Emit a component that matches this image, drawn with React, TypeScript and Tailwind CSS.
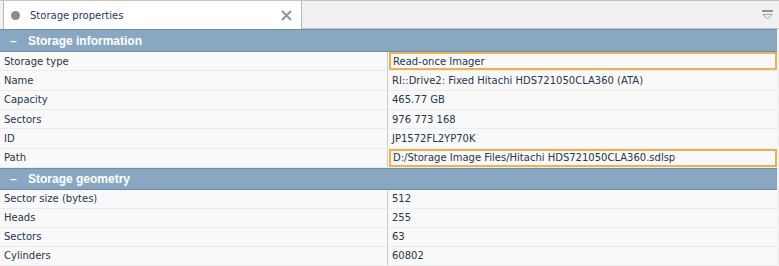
import React from "react";

type Row = { label: string; value: string; boxed?: boolean };

const info: Row[] = [
  { label: "Storage type", value: "Read-once Imager", boxed: true },
  { label: "Name", value: "RI::Drive2: Fixed Hitachi HDS721050CLA360 (ATA)" },
  { label: "Capacity", value: "465.77 GB" },
  { label: "Sectors", value: "976 773 168" },
  { label: "ID", value: "JP1572FL2YP70K" },
  { label: "Path", value: "D:/Storage Image Files/Hitachi HDS721050CLA360.sdlsp", boxed: true },
];

const geometry: Row[] = [
  { label: "Sector size (bytes)", value: "512" },
  { label: "Heads", value: "255" },
  { label: "Sectors", value: "63" },
  { label: "Cylinders", value: "60802" },
];

function Section({ title, first }: { title: string; first?: boolean }) {
  return (
    <div
      className={
        (first ? "h-[23px] " : "h-[22px] ") +
        "flex items-center bg-[#8aa7c2] border-y border-[#6a8cb0] text-white font-bold text-[12px] font-['Liberation_Sans',sans-serif]"
      }
    >
      <span className="w-[28px] pl-[10px]">–</span>
      <span>{title}</span>
    </div>
  );
}

function PropRow({ row, h }: { row: Row; h: string }) {
  return (
    <div className={h + " flex border-b border-[#ececec]"}>
      <div className="w-[388px] pl-[4px] flex items-center border-r border-[#c9c9d9]">{row.label}</div>
      <div className="flex-1 pl-[1px] flex">
        <div
          className={
            row.boxed
              ? "flex-1 flex items-center pl-[2px] border-2 border-[#ebb24f]"
              : "flex-1 flex items-center pl-[3px]"
          }
        >
          {row.value}
        </div>
      </div>
    </div>
  );
}

export default function App() {
  return (
    <div className="w-[779px] h-[266px] overflow-hidden bg-[#f9f9f9] text-[#24364c] text-[10px] font-['DejaVu_Sans',sans-serif]">
      {/* tab strip */}
      <div className="flex h-[29px] bg-[#f0f0f0] border-t border-[#c4c4c4] pl-[3px]">
        <div className="w-[299px] flex items-center bg-white border-l border-r border-[#b8b8b8] pl-[7px] pr-[9px]">
          <span className="w-[9px] h-[9px] rounded-full bg-[#8c8c8c]" />
          <span className="ml-[10px] text-[#1f3a5c]">Storage properties</span>
          <svg className="ml-auto" width="11" height="11" viewBox="0 0 11 11">
            <path d="M1 1L10 10M10 1L1 10" stroke="#8596a6" strokeWidth="2" />
          </svg>
        </div>
        <div className="flex-1 flex items-start justify-end pt-[9px] pr-[6px] border-b border-[#c4c4c4]">
          <svg width="11" height="10" viewBox="0 0 11 10">
            <rect x="0" y="0" width="11" height="2" fill="#8a949e" />
            <path d="M1 4.5H10L5.5 9Z" fill="none" stroke="#9aa3ab" strokeWidth="1" />
          </svg>
        </div>
      </div>
      <div className="flex">
        <div className="flex-1">
          <Section title="Storage information" first />
          {info.map((r) => (
            <PropRow key={r.label} row={r} h="h-[19.33px]" />
          ))}
          <Section title="Storage geometry" />
          {geometry.map((r) => (
            <PropRow key={r.label} row={r} h="h-[19px]" />
          ))}
        </div>
        <div className="w-[2px] bg-[#f2f2f2]" />
      </div>
    </div>
  );
}
